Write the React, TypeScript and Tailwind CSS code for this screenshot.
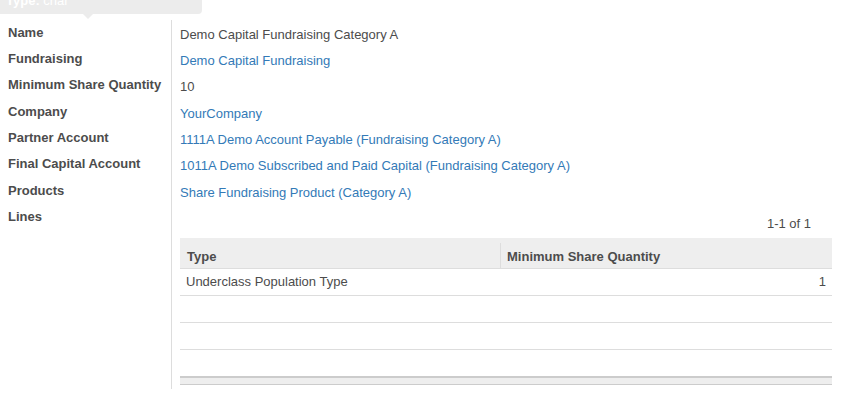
const labels = [
  "Name",
  "Fundraising",
  "Minimum Share Quantity",
  "Company",
  "Partner Account",
  "Final Capital Account",
  "Products",
  "Lines",
];

const values: { text: string; link: boolean }[] = [
  { text: "Demo Capital Fundraising Category A", link: false },
  { text: "Demo Capital Fundraising", link: true },
  { text: "10", link: false },
  { text: "YourCompany", link: true },
  { text: "1111A Demo Account Payable (Fundraising Category A)", link: true },
  { text: "1011A Demo Subscribed and Paid Capital (Fundraising Category A)", link: true },
  { text: "Share Fundraising Product (Category A)", link: true },
];

function Tooltip() {
  return (
    <div className="absolute top-0 left-0">
      <div className="w-[202px] h-[14px] bg-[#ececec] rounded-br-[4px] overflow-hidden relative">
        <div className="absolute left-[6px] top-[-8px] text-white text-[13px] leading-[18px] whitespace-nowrap">
          <b>Type:</b> char
        </div>
      </div>
      <div className="ml-[83px] w-0 h-0 border-l-[5px] border-r-[5px] border-t-[5px] border-l-transparent border-r-transparent border-t-[#ececec]" />
    </div>
  );
}

function LinesTable() {
  return (
    <div className="w-[652px]">
      <div className="flex bg-[#eeeeee] h-[31px] border-b border-[#dddddd] font-bold">
        <div className="w-[320px] pl-[7px] pt-[10px] leading-[18px]">Type</div>
        <div className="flex-1 pt-[5px]">
          <div className="border-l border-[#dddddd] h-[25px] pl-[6px] pt-[5px] leading-[18px]">
            Minimum Share Quantity
          </div>
        </div>
      </div>
      <div className="flex h-[27px] pt-[1px] items-center border-b border-[#dddddd]">
        <div className="w-[320px] pl-[6px]">Underclass Population Type</div>
        <div className="flex-1 text-right pr-[6px]">1</div>
      </div>
      <div className="h-[27px] border-b border-[#dddddd]" />
      <div className="h-[27px] border-b border-[#dddddd]" />
      <div className="h-[26px]" />
      <div className="h-[9px] bg-[#eeeeee] border-t-2 border-b border-t-[#cccccc] border-b-[#cccccc]" />
    </div>
  );
}

export default function App() {
  return (
    <div
      className="relative w-[843px] h-[406px] bg-white text-[13px] text-[#4c4c4c] overflow-hidden"
      style={{ fontFamily: '"Liberation Sans", Arial, sans-serif' }}
    >
      <Tooltip />
      <div className="flex pt-[18px]">
        <div className="w-[171px] pl-[8px] pt-[1.5px] font-bold">
          {labels.map((l) => (
            <div key={l} className="h-[26.4px] leading-[26.4px] whitespace-nowrap">
              {l}
            </div>
          ))}
        </div>
        <div className="mt-[2px] h-[369px] border-l border-[#dddddd] pl-[8px] pt-[1.5px]">
          {values.map((v) => (
            <div
              key={v.text}
              className={
                "h-[26.4px] leading-[26.4px] whitespace-nowrap " +
                (v.link ? "text-[#337ab7]" : "")
              }
            >
              {v.text}
            </div>
          ))}
          <div className="w-[652px] text-right pr-[21px] leading-[18px] mt-[8.5px] mb-[5px]">
            1-1 of 1
          </div>
          <LinesTable />
        </div>
      </div>
    </div>
  );
}
